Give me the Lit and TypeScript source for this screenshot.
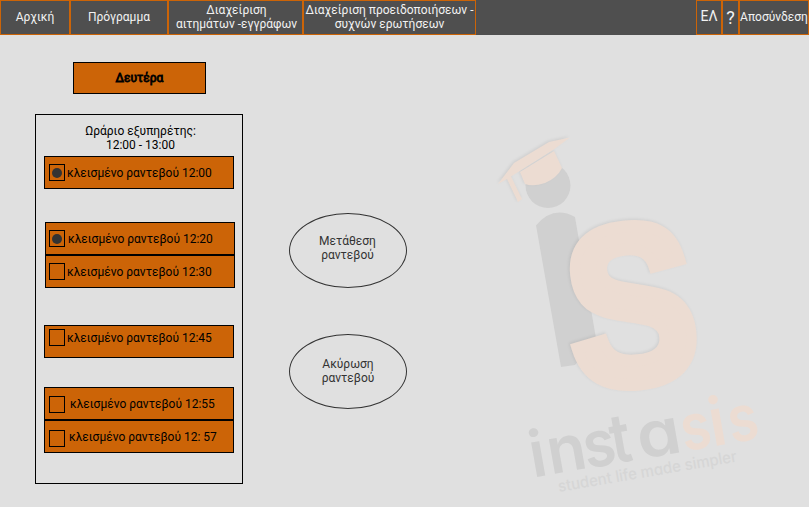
import { LitElement, html, svg, css } from "lit";
import { customElement, property } from "lit/decorators.js";
import { styleMap } from "lit/directives/style-map.js";

interface Slot {
  label: string;
  checked: boolean;
  gap: number;      // space above the row
  shift: number;    // horizontal nudge of the row
  box: number;      // checkbox offset from the row's top
  boxLeft: number;
  textGap: number;
  textTop: number;
}

const SLOTS: Slot[] = [
  { label: "κλεισμένο ραντεβού 12:00", checked: true, gap: 0, shift: 0, box: 7, boxLeft: 4, textGap: 2, textTop: 9 },
  { label: "κλεισμένο ραντεβού 12:20", checked: true, gap: 33, shift: 1, box: 7, boxLeft: 3, textGap: 3, textTop: 9 },
  { label: "κλεισμένο ραντεβού 12:30", checked: false, gap: 0, shift: 1, box: 7, boxLeft: 3, textGap: 2, textTop: 9 },
  { label: "κλεισμένο ραντεβού 12:45", checked: false, gap: 37, shift: 0, box: 3, boxLeft: 4, textGap: 2, textTop: 5 },
  { label: "κλεισμένο ραντεβού 12:55", checked: false, gap: 29, shift: 0, box: 8, boxLeft: 4, textGap: 5, textTop: 9 },
  { label: "κλεισμένο ραντεβού 12: 57", checked: false, gap: 0, shift: 0, box: 9, boxLeft: 4, textGap: 4, textTop: 9 },
];

@customElement("slot-row")
class SlotRow extends LitElement {
  @property({ attribute: false }) slotData!: Slot;
  static styles = css`
    :host { display: block; }
    .row {
      box-sizing: border-box; width: 190px; height: 33px; display: flex;
      align-items: flex-start; background: #cc6407; border: 1px solid #000;
    }
    .check {
      box-sizing: border-box; width: 16px; height: 17px; border: 1px solid #000;
      display: flex; align-items: center; justify-content: center; flex: none;
    }
    .dot { width: 10px; height: 10px; border-radius: 50%; background: #333; }
    .label { white-space: nowrap; line-height: 14px; }
  `;
  render() {
    const s = this.slotData;
    return html`<div class="row" style=${styleMap({ marginTop: `${s.gap}px`, marginLeft: `${s.shift}px` })}>
      <div class="check" style=${styleMap({ marginTop: `${s.box}px`, marginLeft: `${s.boxLeft}px` })}>
        ${s.checked ? html`<div class="dot"></div>` : null}
      </div>
      <span class="label" style=${styleMap({ marginTop: `${s.textTop}px`, marginLeft: `${s.textGap}px` })}>${s.label}</span>
    </div>`;
  }
}

@customElement("brand-watermark")
class BrandWatermark extends LitElement {
  static styles = css`
    :host { display: block; }
    svg { display: block; }
    .grey { fill: #d0d0d0; }
    .peach { fill: #ecdcd2; }
    .cap { filter: drop-shadow(-1px -1px 1.5px rgba(0, 0, 0, 0.08)); }
    .big { font: 700 224px "Liberation Sans", sans-serif; stroke: #ecdcd2; stroke-width: 12px; }
    .word { font: 600 64px Inter, sans-serif; font-feature-settings: "cv11"; }
    .tag { font: 500 16px Inter, sans-serif; font-feature-settings: "cv11"; fill: #d6d6d6; }
  `;
  render() {
    return html`<svg width="329" height="472" viewBox="480 35 329 472">
      ${svg`
      <circle class="grey" cx="548" cy="185.500" r="22.500"/>
      <path class="grey" d="M536 225.500Q553 205 575 217L596 338L575 365L561 367Z"/>
      <g class="peach cap">
        <path d="M498 184L514 163L549 142L570 137.500L553 150L511 176.500L522 199L518 202L507 179Z"/>
        <path d="M520 172L554 151L562 168Q557 178 545 183Q533 187 525 184Z"/>
      </g>
      <g class="peach cap">
        <text class="big" transform="translate(575.500 389) rotate(-6) scale(.86 1)">S</text>
      </g>
      <g transform="translate(537 477.500) rotate(-10)">
        <text class="word grey" x="-4 14" y="-0.500">in</text>
        <text class="word grey" transform="translate(50.500 0) scale(.920 1)">s</text>
        <text class="word grey" transform="translate(78.500 0) scale(.900 1.060)">t</text>
        <text class="word grey" transform="translate(105 0) scale(1.100 1)">a</text>
        <text class="word peach" transform="translate(149.500 0) scale(.860 1)">s</text>
        <text class="word peach" transform="translate(178.500 0) scale(1 1.040)">i</text>
        <text class="word peach" transform="translate(197.500 0) scale(.860 1)">s</text>
      </g>
      <text class="tag" transform="translate(559 492) rotate(-9.700)" textLength="181" lengthAdjust="spacingAndGlyphs">student life made simpler</text>`}
    </svg>`;
  }
}

@customElement("app-root")
class AppRoot extends LitElement {
  static styles = css`
    :host {
      display: flex; flex-direction: column; width: 809px; height: 507px; overflow: hidden;
      background: #e0e0e0; color: #000; font: 12px/14px Roboto, "Noto Sans", sans-serif;
    }
    .bar { display: flex; height: 35px; background: #4f4f4f; color: #f2f2f2; flex: none; }
    .item {
      box-sizing: border-box; height: 35px; border: 1px solid #cc6407; display: flex;
      align-items: center; justify-content: center; text-align: center; white-space: nowrap;
      padding-bottom: 1px;
    }
    .home { width: 70px; }
    .program { width: 98px; }
    .requests { width: 135px; padding-left: 2px; }
    .faq { width: 173px; }
    .spacer { flex: 1; }
    .lang { width: 26px; font-size: 14px; padding-bottom: 3px; }
    .help { width: 17px; font-size: 18px; padding-bottom: 0; }
    .logout { width: 70px; }
    .main { display: grid; grid-template-columns: 208px 118px 329px; height: 472px; padding-left: 35px; }
    .day {
      box-sizing: border-box; width: 133px; height: 32px; margin: 27px 0 20px 38px; border: 1px solid #000;
      background: #cc6407; display: flex; align-items: center; justify-content: center;
      -webkit-text-stroke: 0.8px #000;
    }
    .panel { box-sizing: border-box; width: 208px; height: 370px; border: 1px solid #000; padding: 9px 0 0 8px; }
    .hours { width: 193px; height: 32px; text-align: center; }
    .actions { padding: 178px 0 0 46px; display: flex; flex-direction: column; gap: 46px; }
    .oval {
      box-sizing: border-box; width: 118px; height: 75px; border: 1px solid #333; border-radius: 50%;
      color: #333; text-align: center; padding: 20px 1px 0 0;
    }
    .oval.second { padding: 22px 0 0; }
    .mark { margin-left: 119px; }
  `;
  render() {
    return html`
      <nav class="bar">
        <div class="item home">Αρχική</div>
        <div class="item program">Πρόγραμμα</div>
        <div class="item requests">Διαχείριση<br />αιτημάτων -εγγράφων</div>
        <div class="item faq">Διαχείριση προειδοποιήσεων -<br />συχνών ερωτήσεων</div>
        <div class="spacer"></div>
        <div class="item lang">ΕΛ</div>
        <div class="item help">?</div>
        <div class="item logout">Αποσύνδεση</div>
      </nav>
      <main class="main">
        <section>
          <div class="day">Δευτέρα</div>
          <div class="panel">
            <div class="hours">Ωράριο εξυπηρέτης:<br />12:00 - 13:00</div>
            ${SLOTS.map((s) => html`<slot-row .slotData=${s}></slot-row>`)}
          </div>
        </section>
        <section class="actions">
          <div class="oval">Μετάθεση<br />ραντεβού</div>
          <div class="oval second">Ακύρωση<br />ραντεβού</div>
        </section>
        <brand-watermark class="mark"></brand-watermark>
      </main>
    `;
  }
}
